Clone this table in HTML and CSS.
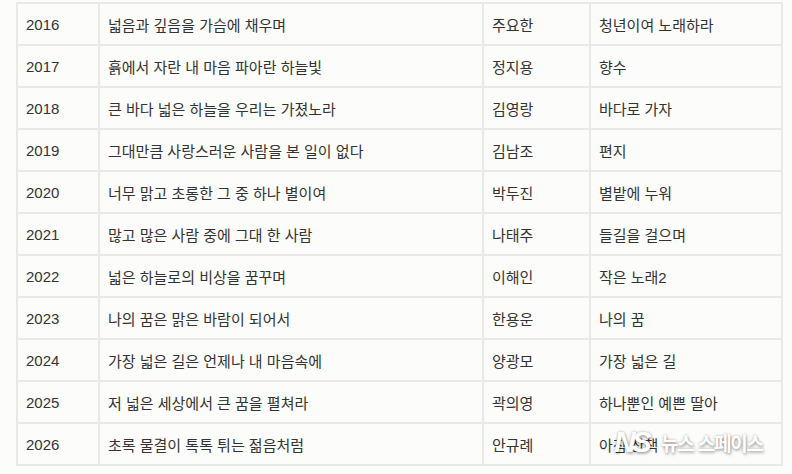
FILE: index.html
```html
<!DOCTYPE html>
<html lang="ko">
<head>
<meta charset="utf-8">
<link rel="stylesheet" href="styles.css">
</head>
<body>
<div class="wrap">
<table class="songs">
<colgroup><col class="c1"><col class="c2"><col class="c3"><col class="c4"></colgroup>
<tbody>
<tr><td>2016</td><td>넓음과 깊음을 가슴에 채우며</td><td>주요한</td><td>청년이여 노래하라</td></tr>
<tr><td>2017</td><td>흙에서 자란 내 마음 파아란 하늘빛</td><td>정지용</td><td>향수</td></tr>
<tr><td>2018</td><td>큰 바다 넓은 하늘을 우리는 가졌노라</td><td>김영랑</td><td>바다로 가자</td></tr>
<tr><td>2019</td><td>그대만큼 사랑스러운 사람을 본 일이 없다</td><td>김남조</td><td>편지</td></tr>
<tr><td>2020</td><td>너무 맑고 초롱한 그 중 하나 별이여</td><td>박두진</td><td>별밭에 누워</td></tr>
<tr><td>2021</td><td>많고 많은 사람 중에 그대 한 사람</td><td>나태주</td><td>들길을 걸으며</td></tr>
<tr><td>2022</td><td>넓은 하늘로의 비상을 꿈꾸며</td><td>이해인</td><td>작은 노래2</td></tr>
<tr><td>2023</td><td>나의 꿈은 맑은 바람이 되어서</td><td>한용운</td><td>나의 꿈</td></tr>
<tr><td>2024</td><td>가장 넓은 길은 언제나 내 마음속에</td><td>양광모</td><td>가장 넓은 길</td></tr>
<tr><td>2025</td><td>저 넓은 세상에서 큰 꿈을 펼쳐라</td><td>곽의영</td><td>하나뿐인 예쁜 딸아</td></tr>
<tr><td>2026</td><td>초록 물결이 톡톡 튀는 젊음처럼</td><td>안규례</td><td>아침 산책</td></tr>
</tbody>
</table>
<div class="mark"><span class="logo">NS</span><span class="name">뉴스 스페이스</span></div>
</div>
</body>
</html>
```
FILE: styles.css
```css
html, body {
  margin: 0;
  padding: 0;
  background: #fcfcfa;
}
.wrap {
  position: relative;
  padding: 2px 11px 0 16px;
}
.songs {
  width: 765px;
  border-collapse: collapse;
  font-family: "Liberation Sans", "Noto Sans CJK KR", sans-serif;
  font-size: 15px;
  color: #333;
  table-layout: fixed;
}
.c1 { width: 82px; }
.c2 { width: 384px; }
.c3 { width: 107px; }
.c4 { width: 192px; }
.songs td {
  border: 2px solid #e9e9e7;
  height: 40px;
  padding: 0 0 0 8px;
  vertical-align: middle;
  white-space: nowrap;
}
.mark {
  position: absolute;
  left: 614px;
  top: 425px;
  display: flex;
  align-items: center;
  gap: 3px;
  color: #fff;
  font-family: "Noto Sans CJK KR", sans-serif;
  font-weight: 700;
  text-shadow: 0 0 3px rgba(0,0,0,0.3), 1px 2px 3px rgba(0,0,0,0.25);
}
.logo {
  font-family: "Liberation Sans", sans-serif;
  font-style: italic;
  font-weight: 700;
  font-size: 30px;
  letter-spacing: -4px;
  width: 44px;
}
.name {
  font-size: 19px;
  letter-spacing: -1.2px;
}
```
